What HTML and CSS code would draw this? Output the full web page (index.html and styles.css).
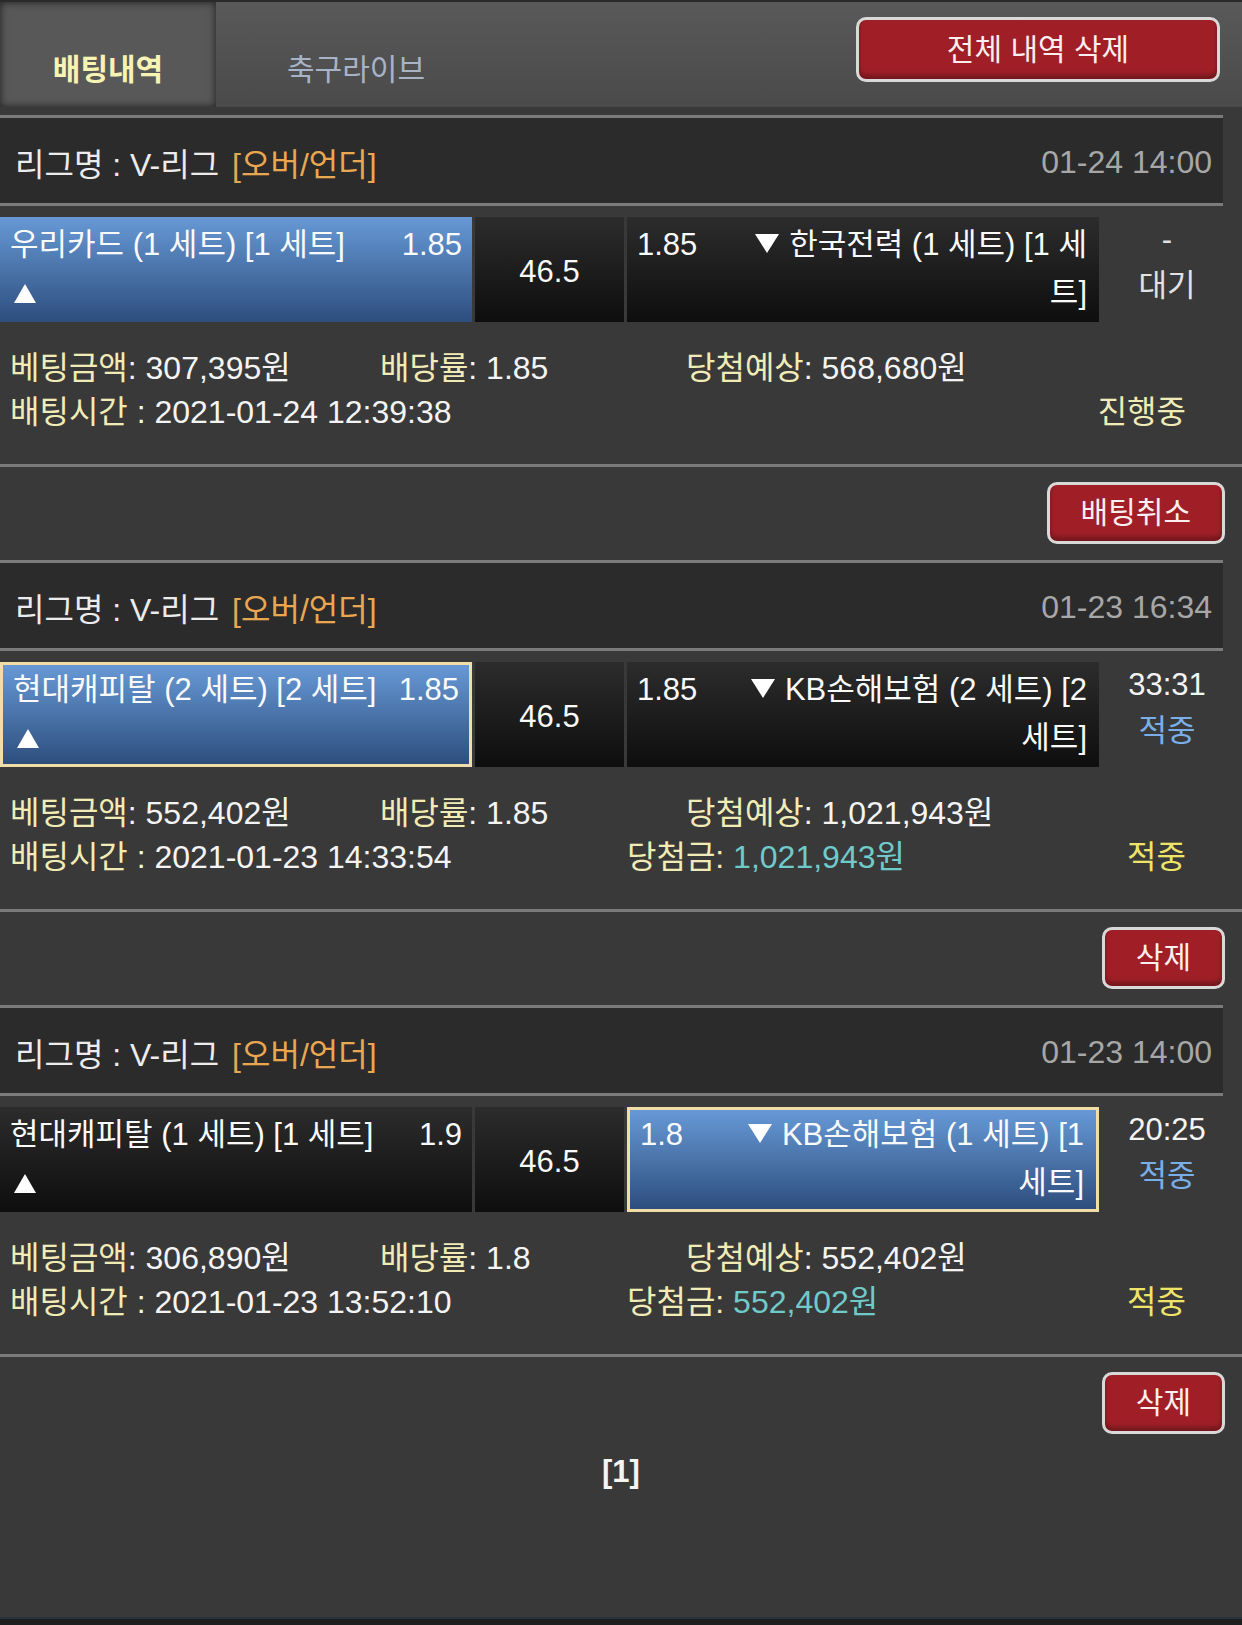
FILE: index.html
```html
<!DOCTYPE html>
<html lang="ko">
<head>
<meta charset="utf-8">
<title>배팅내역</title>
<link rel="stylesheet" href="styles.css">
</head>
<body>
<main class="page">
  <nav class="tabbar">
    <a class="tab tab-active">배팅내역</a>
    <a class="tab">축구라이브</a>
    <button class="btn btn-clear">전체 내역 삭제</button>
  </nav>

  <section class="bet">
    <div class="league">
      <span>리그명 : V-리그</span><span class="market">[오버/언더]</span><span class="date">01-24 14:00</span>
    </div>
    <div class="match">
      <div class="team home blue">
        <div class="team-line"><span>우리카드 (1 세트) [1 세트]</span><span>1.85</span></div>
        <div class="arrow-line"><i class="tri tri-up"></i></div>
      </div>
      <div class="base dark">46.5</div>
      <div class="team away dark">
        <span class="odds">1.85</span>
        <span class="away-name"><i class="tri tri-down"></i>한국전력 (1 세트) [1 세트]</span>
      </div>
      <div class="status"><span class="muted">-</span><span class="muted">대기</span></div>
    </div>
    <div class="info">
      <div class="info-row">
        <span><span class="lbl">베팅금액</span>: 307,395원</span>
        <span><span class="lbl">배당률</span>: 1.85</span>
        <span><span class="lbl">당첨예상</span>: 568,680원</span>
      </div>
      <div class="info-row info-row2">
        <span><span class="lbl">배팅시간</span> : 2021-01-24 12:39:38</span>
        <span></span>
        <span class="result pending">진행중</span>
      </div>
    </div>
  </section>
  <div class="actions"><button class="btn">배팅취소</button></div>

  <section class="bet">
    <div class="league">
      <span>리그명 : V-리그</span><span class="market">[오버/언더]</span><span class="date">01-23 16:34</span>
    </div>
    <div class="match">
      <div class="team home blue sel">
        <div class="team-line"><span>현대캐피탈 (2 세트) [2 세트]</span><span>1.85</span></div>
        <div class="arrow-line"><i class="tri tri-up"></i></div>
      </div>
      <div class="base dark">46.5</div>
      <div class="team away dark">
        <span class="odds">1.85</span>
        <span class="away-name"><i class="tri tri-down"></i>KB손해보험 (2 세트) [2 세트]</span>
      </div>
      <div class="status"><span>33:31</span><span class="hit-blue">적중</span></div>
    </div>
    <div class="info">
      <div class="info-row">
        <span><span class="lbl">베팅금액</span>: 552,402원</span>
        <span><span class="lbl">배당률</span>: 1.85</span>
        <span><span class="lbl">당첨예상</span>: 1,021,943원</span>
      </div>
      <div class="info-row info-row2">
        <span><span class="lbl">배팅시간</span> : 2021-01-23 14:33:54</span>
        <span><span class="lbl">당첨금:</span> <span class="won">1,021,943원</span></span>
        <span class="result hit">적중</span>
      </div>
    </div>
  </section>
  <div class="actions"><button class="btn">삭제</button></div>

  <section class="bet">
    <div class="league">
      <span>리그명 : V-리그</span><span class="market">[오버/언더]</span><span class="date">01-23 14:00</span>
    </div>
    <div class="match">
      <div class="team home dark">
        <div class="team-line"><span>현대캐피탈 (1 세트) [1 세트]</span><span>1.9</span></div>
        <div class="arrow-line"><i class="tri tri-up"></i></div>
      </div>
      <div class="base dark">46.5</div>
      <div class="team away blue sel">
        <span class="odds">1.8</span>
        <span class="away-name"><i class="tri tri-down"></i>KB손해보험 (1 세트) [1 세트]</span>
      </div>
      <div class="status"><span>20:25</span><span class="hit-blue">적중</span></div>
    </div>
    <div class="info">
      <div class="info-row">
        <span><span class="lbl">베팅금액</span>: 306,890원</span>
        <span><span class="lbl">배당률</span>: 1.8</span>
        <span><span class="lbl">당첨예상</span>: 552,402원</span>
      </div>
      <div class="info-row info-row2">
        <span><span class="lbl">배팅시간</span> : 2021-01-23 13:52:10</span>
        <span><span class="lbl">당첨금:</span> <span class="won">552,402원</span></span>
        <span class="result hit">적중</span>
      </div>
    </div>
  </section>
  <div class="actions"><button class="btn">삭제</button></div>

  <div class="pager">[1]</div>
</main>
<footer class="footer"></footer>
</body>
</html>
```

FILE: styles.css
```css
* {
  box-sizing: border-box;
}

html,
body {
  margin: 0;
}

body {
  height: 1625px;
  overflow: hidden;
  display: flex;
  flex-direction: column;
  background: #393939;
  color: #f4f4f4;
  font-family: "Liberation Sans", "Noto Sans CJK KR", sans-serif;
  font-size: 32px;
  font-size-adjust: cap-height 0.688;
}

.page {
  flex: 1;
}

/* ---------- tab bar ---------- */
.tabbar {
  display: flex;
  align-items: flex-start;
  height: 107px;
  margin-bottom: 8px;
  border-top: 2px solid #2a2a2a;
  background: linear-gradient(#595959, #4a4a4a);
}

.tab {
  width: 280px;
  height: 105px;
  padding-top: 46px;
  line-height: 44px;
  text-align: center;
  font-size: 30px;
  color: #a8b3c7;
}

.tab-active {
  width: 216px;
  background: #585858;
  box-shadow: inset 0 0 7px 1px rgba(0, 0, 0, 0.55);
  color: #f7f3b2;
  font-weight: bold;
}

/* ---------- buttons ---------- */
.btn {
  font: inherit;
  font-size: 30px;
  color: #fbeeee;
  background: #a01f27;
  border: 3px solid #d9d9d9;
  border-radius: 10px;
  box-shadow: inset 0 -4px 5px rgba(0, 0, 0, 0.3);
  height: 62px;
  padding: 0 31px;
  line-height: 54px;
}

.btn-clear {
  width: 364px;
  height: 65px;
  margin: 15px 22px 0 auto;
}

.actions {
  display: flex;
  justify-content: flex-end;
  padding: 15px 17px 16px 0;
}

/* ---------- bet block ---------- */
.bet {
  border-bottom: 3px solid #7b7b7b;
}

.league {
  width: 1223px;
  height: 91px;
  display: flex;
  align-items: center;
  padding: 3px 11px 0 15px;
  border-top: 3px solid #7b7b7b;
  border-bottom: 3px solid #7b7b7b;
  background: #2b2b2b;
  color: #ececec;
}

.market {
  margin-left: 13px;
  color: #e9a752;
}

.date {
  margin-left: auto;
  color: #a7a7a7;
}

/* ---------- match row ---------- */
.match {
  display: grid;
  grid-template-columns: 472px 149px 472px 1fr;
  column-gap: 3px;
  height: 105px;
  margin-top: 11px;
  font-size: 31px;
}

.team {
  padding: 4px 10px 0;
  line-height: 48px;
  color: #fafafa;
}

.blue {
  background: linear-gradient(#6799d6, #2d4e7d);
}

.dark {
  background: linear-gradient(#2c2c2c, #0e0e0e);
}

.sel {
  border: 3px solid #f1dea6;
  padding-top: 1px;
}

.team-line {
  display: flex;
  justify-content: space-between;
  white-space: nowrap;
}

.arrow-line {
  height: 48px;
  display: flex;
  align-items: center;
}

.tri {
  display: inline-block;
  width: 0;
  height: 0;
  border-left: 11px solid transparent;
  border-right: 11px solid transparent;
}

.tri-up {
  margin-left: 4px;
  border-bottom: 19px solid #ffffff;
}

.tri-down {
  margin-right: 10px;
  border-left-width: 12px;
  border-right-width: 12px;
  border-top: 19px solid #ffffff;
  vertical-align: 2px;
}

.base {
  display: flex;
  align-items: center;
  justify-content: center;
  padding-top: 4px;
  color: #fafafa;
}

.away {
  display: flex;
  padding-right: 12px;
}

.odds {
  flex: 1;
}

.away-name {
  flex: none;
  width: 362px;
  text-align: right;
}

.status {
  display: flex;
  flex-direction: column;
  align-items: center;
  padding-right: 10px;
  line-height: 46px;
  color: #f4f4f4;
}

.muted {
  color: #e2e2e2;
}

.hit-blue {
  color: #7aaee6;
}

/* ---------- info ---------- */
.info {
  padding: 24px 0 30px 10px;
  line-height: 44px;
}

.info-row {
  display: grid;
  grid-template-columns: 370px 306px 1fr;
  white-space: nowrap;
}

.info-row2 {
  grid-template-columns: 617px 1fr auto;
}

.lbl {
  color: #f1ecb6;
}

.won {
  color: #6fcaca;
}

.result {
  padding-right: 56px;
}

.pending {
  color: #f1ecb6;
}

.hit {
  color: #efe36a;
}

/* ---------- pager / footer ---------- */
.pager {
  text-align: center;
  font-weight: bold;
  font-size: 31px;
  line-height: 44px;
}

.footer {
  flex: none;
  height: 8px;
  border-top: 2px solid #28323e;
  background: #1e1e1e;
}
```
